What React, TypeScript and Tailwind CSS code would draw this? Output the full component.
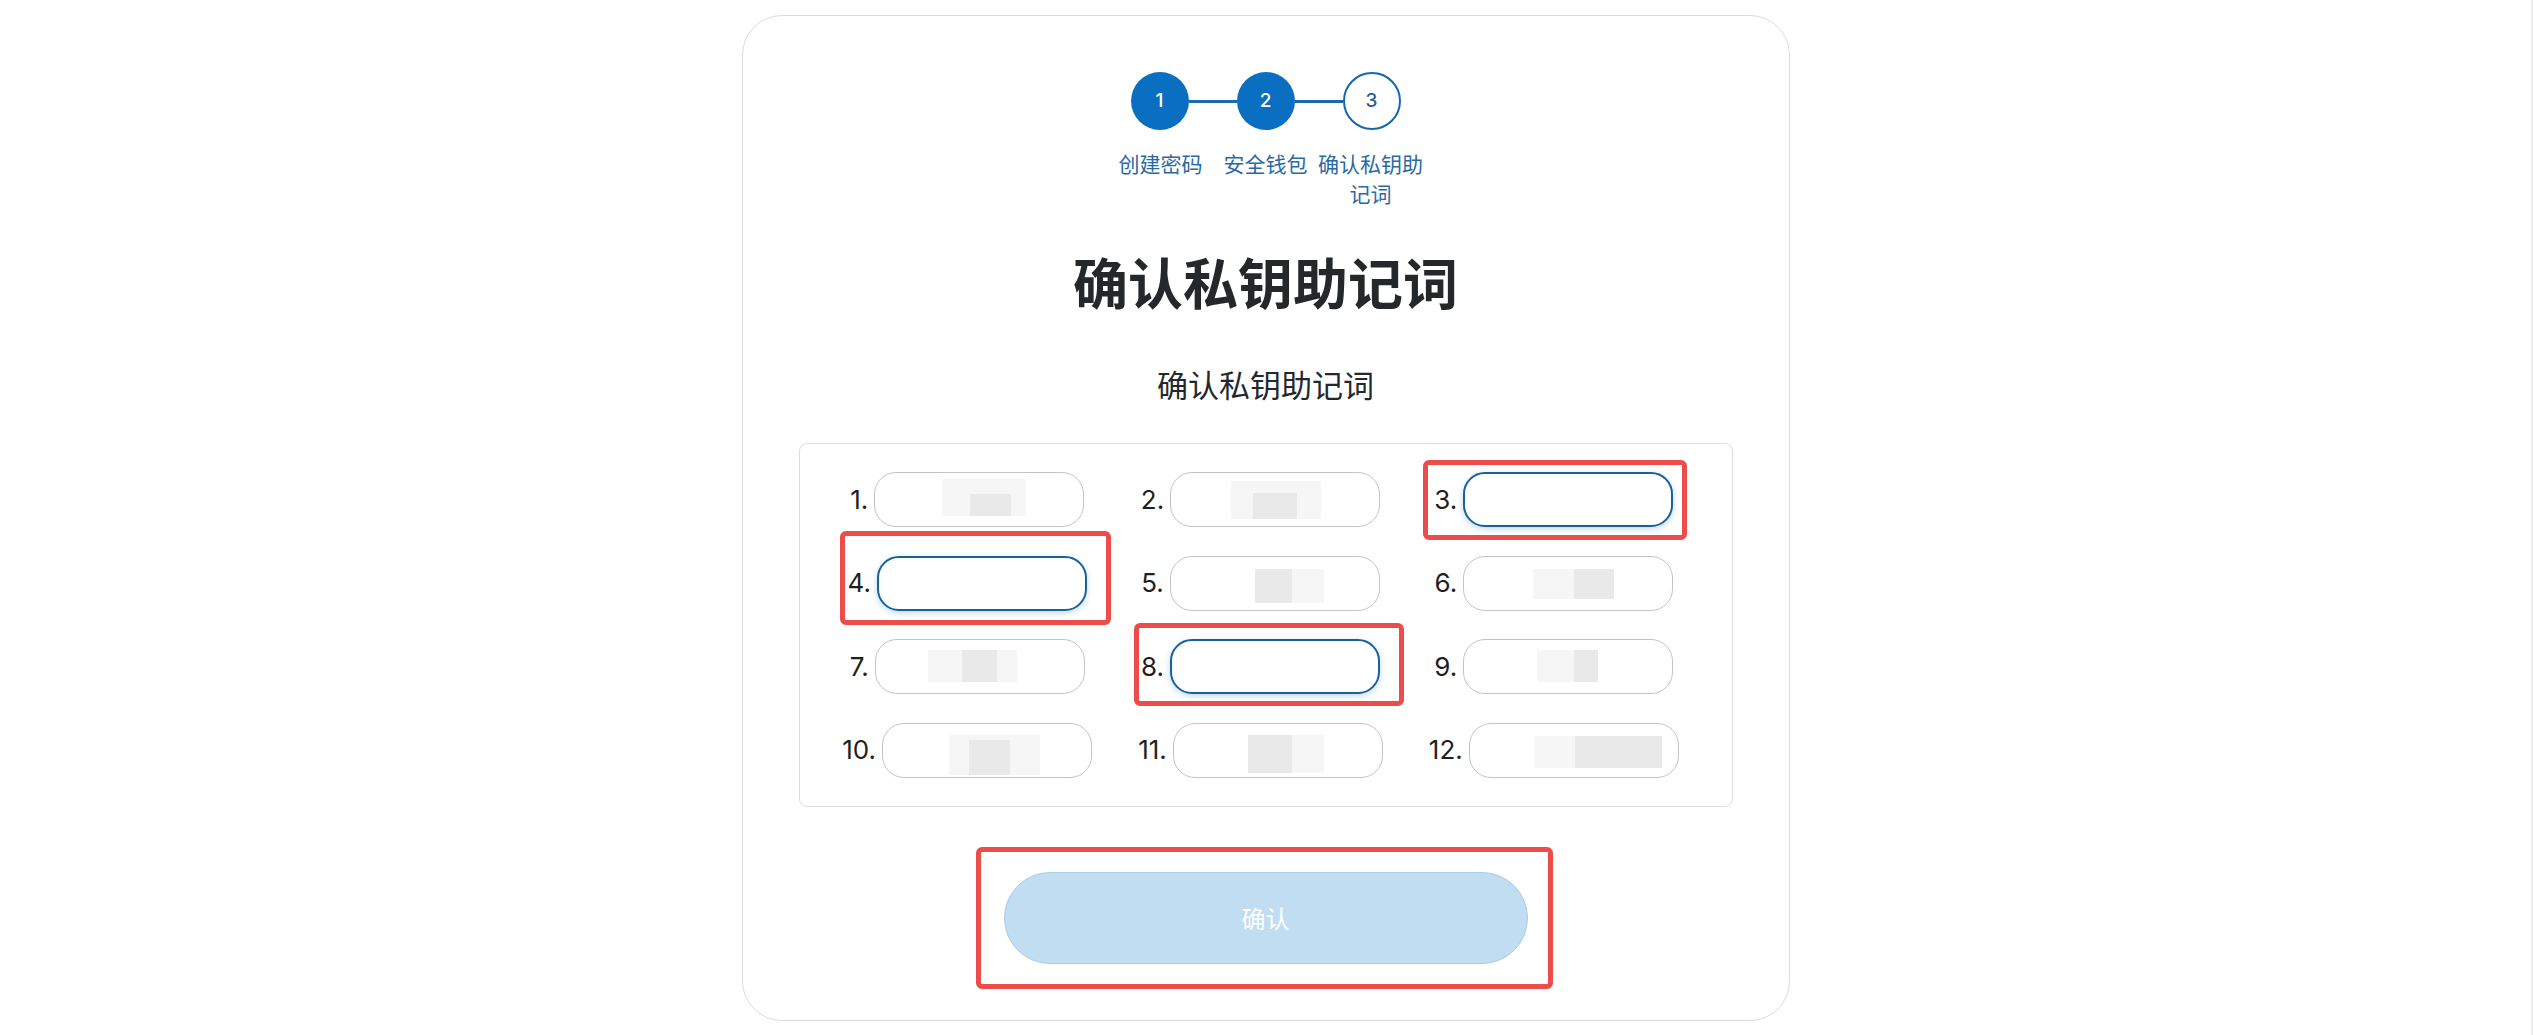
import React from "react";

type Patch = { l: number; w: number; dl: number; dw: number; t: number; h: number; dt: number };

const patches: Record<number, Patch> = {
  1: { l: 67, w: 84, dl: 95, dw: 41, t: 6, h: 37, dt: 21 },
  2: { l: 60, w: 90, dl: 82, dw: 44, t: 8, h: 38, dt: 20 },
  5: { l: 84, w: 69, dl: 84, dw: 37, t: 12, h: 34, dt: 12 },
  6: { l: 69, w: 81, dl: 110, dw: 40, t: 12, h: 30, dt: 12 },
  7: { l: 52, w: 89, dl: 86, dw: 35, t: 10, h: 32, dt: 10 },
  9: { l: 73, w: 61, dl: 110, dw: 24, t: 10, h: 32, dt: 10 },
  10: { l: 66, w: 91, dl: 86, dw: 41, t: 11, h: 40, dt: 16 },
  11: { l: 74, w: 76, dl: 74, dw: 44, t: 11, h: 38, dt: 11 },
  12: { l: 65, w: 127, dl: 105, dw: 87, t: 12, h: 32, dt: 12 },
};

const focused = new Set([3, 4, 8]);

function Cell({ n }: { n: number }) {
  const p = patches[n];
  const isFocus = focused.has(n);
  return (
    <div className="flex items-center justify-center gap-[6px]">
      <span className="text-[26px] leading-none text-[#1f1f1f] font-['Inter',sans-serif]">{n}.</span>
      <div
        className={
          isFocus
            ? "relative w-[210px] h-[55px] rounded-[22px] border-[2.5px] border-[#16629f] bg-white shadow-[0_2px_6px_rgba(22,98,159,0.25)]"
            : "relative w-[210px] h-[55px] rounded-[22px] border border-[#c4c4c4] bg-white overflow-hidden"
        }
      >
        {p && (
          <>
            <div
              className="absolute bg-[#f6f6f6]"
              style={{ left: p.l, width: p.w, top: p.t, height: p.h }}
            />
            <div
              className="absolute bg-[#e9e9e9]"
              style={{ left: p.dl, width: p.dw, top: p.dt, height: p.t + p.h - p.dt }}
            />
          </>
        )}
      </div>
    </div>
  );
}

function StepCircle({ n, filled }: { n: number; filled: boolean }) {
  return filled ? (
    <div className="w-[58px] h-[58px] rounded-full bg-[#0a6fc1] flex items-center justify-center text-white text-[19px] font-['Inter',sans-serif] font-medium">
      {n}
    </div>
  ) : (
    <div className="w-[58px] h-[58px] rounded-full border-[2.5px] border-[#1468b0] bg-white flex items-center justify-center text-[#275f96] text-[19px] font-['Inter',sans-serif] font-medium">
      {n}
    </div>
  );
}

export default function App() {
  const cjk = "font-['Noto_Sans_CJK_SC','Noto_Sans',sans-serif]";
  return (
    <div className={`flex w-full min-h-[1035px] bg-white ${cjk}`}>
      <div className="flex-1 flex justify-center">
        <div className="mt-[15px] w-[1048px] h-[1006px] border border-[#dcdcdc] rounded-[40px] bg-white flex flex-col items-center pt-[56px] pb-[56px]">
          {/* Stepper */}
          <div className="flex items-center">
            <StepCircle n={1} filled />
            <div className="w-[48px] h-[3px] bg-[#1a6bae]" />
            <StepCircle n={2} filled />
            <div className="w-[48px] h-[3px] bg-[#1a6bae]" />
            <StepCircle n={3} filled={false} />
          </div>
          <div className="flex mt-[18px] h-[60px]">
            {["创建密码", "安全钱包", "确认私钥助记词"].map((t) => (
              <div key={t} className="w-[105px] flex justify-center">
                <div className="w-[112px] shrink-0 text-center text-[21px] leading-[30px] text-[#2a6aa3]">{t}</div>
              </div>
            ))}
          </div>

          <h1 className="mt-[37px] text-[55px] leading-[70px] font-bold text-[#25282b]">确认私钥助记词</h1>
          <p className="mt-[49px] text-[31px] leading-[40px] text-[#25282b]">确认私钥助记词</p>

          {/* Word grid */}
          <div className="relative mt-[39px] w-[934px] h-[364px] border border-[#dddddd] rounded-[8px] pl-[21px] pr-[31px] py-[28px] grid grid-cols-3 gap-y-[28.67px]">
            {Array.from({ length: 12 }, (_, i) => (
              <Cell key={i} n={i + 1} />
            ))}
            <div className="absolute left-[623px] top-[16px] w-[264px] h-[80px] border-[5px] border-[#ec4d4a] rounded-[6px] pointer-events-none" />
            <div className="absolute left-[40px] top-[87px] w-[271px] h-[94px] border-[5px] border-[#ec4d4a] rounded-[6px] pointer-events-none" />
            <div className="absolute left-[334px] top-[179px] w-[270px] h-[83px] border-[5px] border-[#ec4d4a] rounded-[6px] pointer-events-none" />
          </div>

          {/* Confirm button */}
          <div className="relative mt-[65px]">
            <button className="w-[524px] h-[92px] rounded-full bg-[#c0ddf1] border border-[#a9cce6] text-white text-[24px]">
              确认
            </button>
            <div className="absolute -left-[28px] -top-[25px] w-[577px] h-[142px] border-[5px] border-[#ec4d4a] rounded-[6px] pointer-events-none" />
          </div>
        </div>
      </div>
      <div className="w-[2px] bg-[#ececec]" />
    </div>
  );
}
